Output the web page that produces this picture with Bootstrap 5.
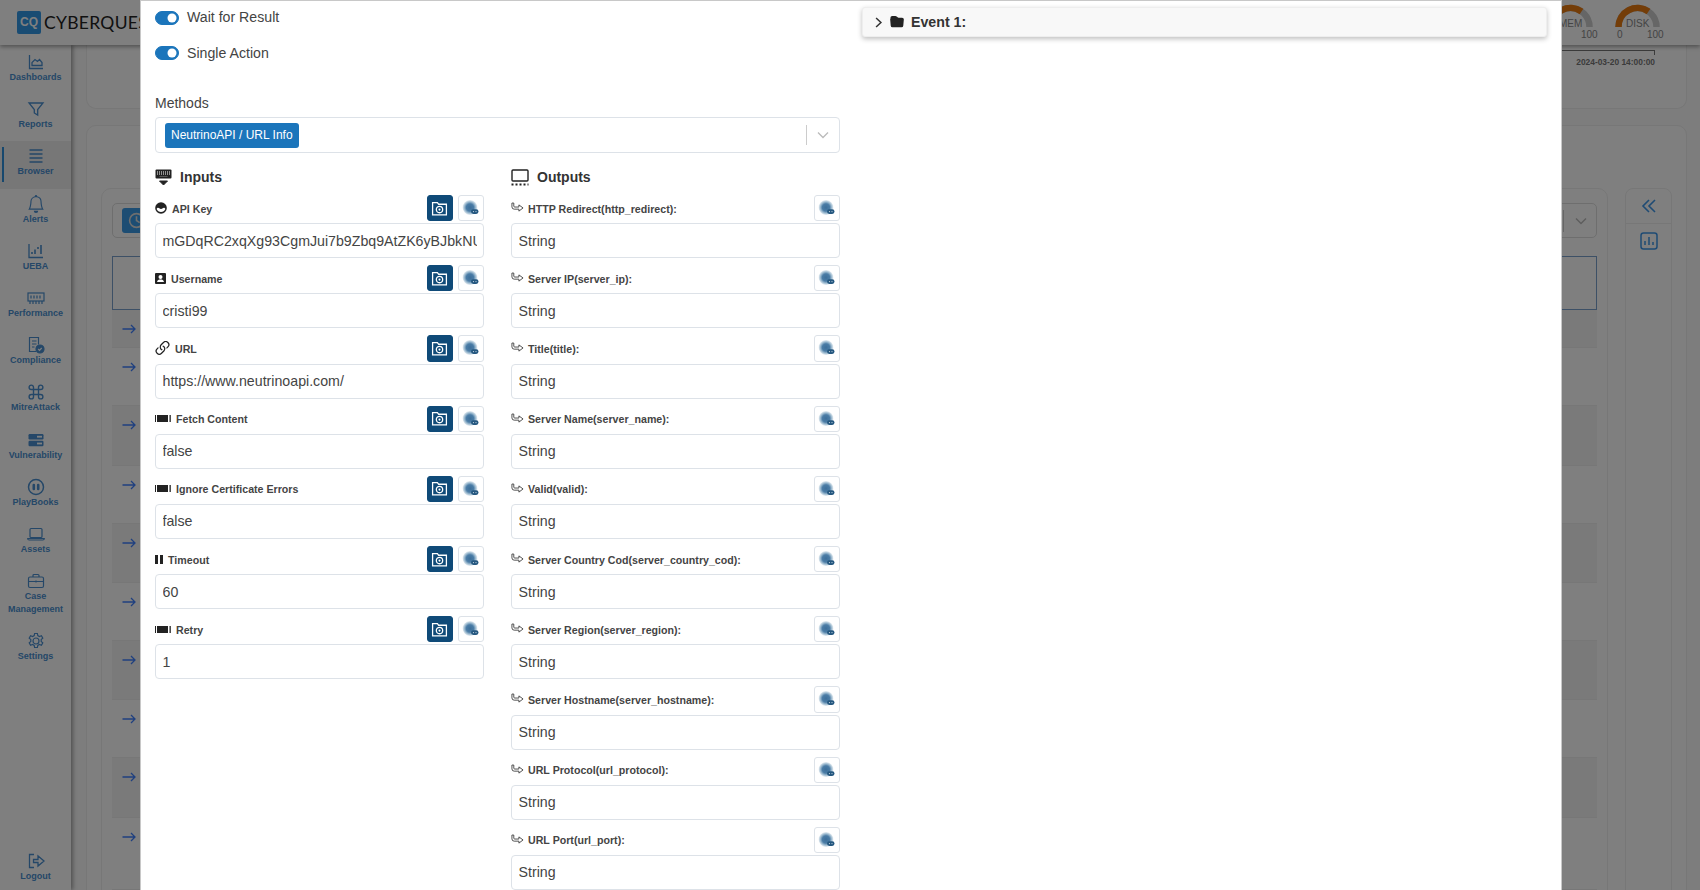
<!DOCTYPE html>
<html lang="en">
<head>
<meta charset="utf-8">
<title>Playbook action</title>
<link href="https://cdn.jsdelivr.net/npm/bootstrap@5.3.0/dist/css/bootstrap.min.css" rel="stylesheet">
<style>
html,body{height:890px;overflow:hidden;}
body{font-family:"Liberation Sans",Arial,sans-serif;font-size:14px;line-height:21px;color:#3a3a3a;background:#fafafa;}
.ic{display:block;fill:none;stroke:currentColor;}
.app-top{height:45px;background:#fff;box-shadow:0 2px 4px rgba(0,0,0,.35);position:relative;z-index:2;}
.brand-mark{width:24px;height:23px;margin-left:17px;border-radius:2px;background:#3398e6;color:#fff;font-size:12px;font-weight:700;line-height:23px;text-align:center;}
.brand-text{margin-left:3px;font-family:Lato,"Liberation Sans",sans-serif;font-size:17.500px;letter-spacing:.3px;color:#222;white-space:nowrap;}
.gauge-w{width:67px;}
.gauge-w svg{display:block;}
.gauge-w text{font-family:"Liberation Sans",sans-serif;font-size:10px;fill:#888;}
.app-body{height:845px;}
.side{width:71px;height:845px;background:#fff;box-shadow:2px 0 4px rgba(0,0,0,.35);position:relative;z-index:1;padding-top:2px;color:#4a8fd0;flex:none;}
.side-it{padding:6px 0 10.200px;text-align:center;font-size:9px;font-weight:700;line-height:13px;position:relative;}
.side-it svg{margin:0 auto;}
.side-it.on{background:#eee;}
.side-it.on::before{content:"";position:absolute;left:2px;top:6px;bottom:7px;width:2px;background:#2f90dc;}
.side-out{margin-top:auto;padding:6px 0 0;height:44px;}
.main-a{padding:0 13px 0 15px;min-width:0;}
.panel-a{height:64px;margin-bottom:16px;border:1px solid #eee;border-top:0;border-radius:0 0 10px 10px;background:#fff;padding:5px 31px 0 0;font-size:8.400px;font-weight:700;color:#777;text-align:right;line-height:10px;}
.axis-l{height:5px;margin:0 0 2px 1400px;border:1px solid #777;border-width:1px 1px 0 0;}
.panel-b{height:800px;border:1px solid #eee;border-radius:10px 10px 0 0;background:#fff;padding:62px 14px 0;gap:17px;}
.panel-c{min-width:0;border:1px solid #eee;border-radius:10px 10px 0 0;padding:14px 10px 0;}
.tool-b{height:35px;border:1px solid #ddd;border-radius:5px;padding:5px 9px;margin-bottom:18px;color:#bbb;}
.tool-clock{width:34px;height:25px;background:#3a9ae6;border-radius:3px;color:#ddd;padding:4px 6px;}
.tool-sep{width:1px;height:22px;background:#ccc;margin:0 11px;}
.frame-b{height:54px;border:1px solid #7aa0cc;}
.line-r{border-bottom:1px solid #eee;padding:11px 0 0 9px;color:#3f80ff;display:flex;align-items:flex-start;}
.line-d{background:#f4f4f4;}
.rail{width:47px;flex:none;border:1px solid #eee;border-radius:8px 8px 0 0;color:#3e97e8;}
.rail-h{height:35px;border-bottom:1px solid #eee;}
.dialog-w{width:1422px;max-width:1422px;margin:0 0 0 140px;}
.dialog-c{height:892px;overflow:hidden;border-radius:0;border:1px solid #c8c8c8;background-clip:border-box;}
.dialog-b{padding:6px 14px 0;flex:none;}
.row-m{--bs-gutter-x:22px;}
.row-i{--bs-gutter-x:27px;}
.sw-r{min-height:21px;padding-left:32px;margin-bottom:14.500px;font-size:14.150px;color:#444;}
.sw-r .form-check-input{width:24px;height:14px;margin-left:-32px;margin-top:3.500px;font-size:14px;background-color:#1b75bb;border-color:#1b75bb;}
.meth-l{margin:29px 0 3.500px;color:#444;}
.meth-s{height:36px;border:1px solid #dde2e8;border-radius:4px;padding:5px 9px;}
.chip-m{background:#1b75bb;color:#fff;font-size:12px;line-height:25px;height:25px;padding:0 6.500px 0 6px;border-radius:3px;}
.sep-m{width:1px;height:20px;background:#ccc;margin:0 10px 0 0;}
.sec-h{height:18px;margin:15px 0 9px;font-weight:700;color:#333;gap:8px;}
.sec-h svg{color:#222;}
.fld{margin-bottom:7px;}
.fld-h{height:26.200px;margin-bottom:2px;}
.fld-l{font-size:10.650px;font-weight:700;color:#444;line-height:14px;gap:5px;padding-top:1px;}
.fld-l svg{color:#222;margin-top:-1px;}
.fld-o{gap:4px;}
.fld-o svg{color:#444;margin-top:-2px;}
.btn-p{width:25.600px;height:26.200px;padding:0;border-radius:3px;background:#0f4a78;border:1px solid #0f4a78;color:#fff;display:flex;align-items:center;justify-content:center;}
.btn-q{width:26.400px;height:26.200px;padding:0;margin-left:5px;border-radius:3px;background:#fff;border:1px solid #dde2e8;display:flex;align-items:center;justify-content:center;}
.btn-p:hover{background:#0f4a78;color:#fff;border-color:#0f4a78;}
.btn-q:hover{background:#fff;border-color:#dde2e8;}
.inp-x{height:35px;font-size:14.200px;line-height:21px;padding:6px 6.500px;border:1px solid #dde2e8;border-radius:4px;color:#444;}
.ev-b{height:30px;border:1px solid #eee;border-radius:3px;background:#f8f8f8;box-shadow:0 2px 5px rgba(0,0,0,.25);padding:0 0 0 10px;color:#333;font-size:14.200px;font-weight:700;gap:6px;}
.ev-b span{margin-left:1px;}
</style>
</head>
<body>
<svg width="0" height="0" class="position-absolute">
<defs>
<radialGradient id="blobg"><stop offset="0" stop-color="#3d6f9a"/><stop offset=".5" stop-color="#4a7ca6"/><stop offset=".78" stop-color="#a3bfd3"/><stop offset="1" stop-color="#e6edf2"/></radialGradient>
<symbol id="i-shot" viewBox="0 0 16 16"><path d="M1.500 14V2.500h4.500l1.200 1.500h7.300v10z" fill="none" stroke="currentColor" stroke-width="1.200"/><circle cx="8" cy="9" r="3" fill="none" stroke="currentColor" stroke-width="1.200"/><circle cx="8" cy="9" r="1" fill="currentColor"/></symbol>
<symbol id="i-blob" viewBox="0 0 18 18"><circle cx="8" cy="8.500" r="7.400" fill="url(#blobg)"/><rect x="9" y="10.300" width="7.500" height="4.600" rx="2.300" fill="#24577f"/><circle cx="11.500" cy="12.600" r=".6" fill="#c3d4e1"/><circle cx="14" cy="12.600" r=".6" fill="#c3d4e1"/></symbol>
<symbol id="i-bool" viewBox="0 0 16 7"><rect x="0" y="0" width="1" height="7" fill="currentColor"/><rect x="2" y="0" width="11" height="7" fill="currentColor"/><rect x="14.500" y="0" width="1.300" height="7" fill="currentColor"/></symbol>
<symbol id="i-sub" viewBox="0 0 14 11"><path d="M1 .7h2V4q0 1 1 1h4.500V2.700L13 6l-4.500 3.400V7.300H3.500Q1 7.300 1 4.800z" fill="none" stroke="currentColor" stroke-width="1"/></symbol>
</defs>
</svg>

<header class="app-top d-flex align-items-center">
  <div class="brand-mark">CQ</div>
  <div class="brand-text">CYBERQUEST</div>
  <div class="d-flex ms-auto gauge-g" style="margin-right:29.500px">
    <div class="gauge-w"><svg width="67" height="45" viewBox="0 0 67 45"><path d="M14.500 27a19 19 0 0 1 38 0" fill="none" stroke="#ccc" stroke-width="6.500"/><path d="M14.500 27a19 19 0 0 1 30-15.500" fill="none" stroke="#e87a10" stroke-width="6.500"/><text x="22" y="27">MEM</text><text x="11" y="38">0</text><text x="44" y="38">100</text></svg></div>
    <div class="gauge-w"><svg width="67" height="45" viewBox="0 0 67 45"><path d="M14.500 27a19 19 0 0 1 38 0" fill="none" stroke="#ccc" stroke-width="6.500"/><path d="M14.500 27a19 19 0 0 1 30-15.500" fill="none" stroke="#e87a10" stroke-width="6.500"/><text x="22" y="27">DISK</text><text x="13" y="38">0</text><text x="43" y="38">100</text></svg></div>
  </div>
</header>

<div class="app-body d-flex">
  <nav class="side d-flex flex-column">
    <div class="side-it"><svg class="ic" width="18" height="18" viewBox="0 0 18 18" stroke-width="1.300"><path d="M2.500 2v13.500H16"/><path d="M5 12.500V9.500l3-3 2.500 2 2-2 2.500 3v3z"/></svg>Dashboards</div>
    <div class="side-it"><svg class="ic" width="18" height="18" viewBox="0 0 18 18" stroke-width="1.300"><path d="M2 3h14l-5.300 6.500V15l-3.400-2V9.500z"/></svg>Reports</div>
    <div class="side-it on"><svg class="ic" width="18" height="18" viewBox="0 0 18 18" stroke-width="1.500"><path d="M2.500 3h13M2.500 7h13M2.500 11h13M2.500 15h13"/></svg>Browser</div>
    <div class="side-it"><svg class="ic" width="18" height="18" viewBox="0 0 16 16" style="stroke:none"><path fill="currentColor" d="M8 16a2 2 0 0 0 2-2H6a2 2 0 0 0 2 2zM8 1.918l-.797.161A4.002 4.002 0 0 0 4 6c0 .628-.134 2.197-.459 3.742-.16.767-.376 1.566-.663 2.258h10.244c-.287-.692-.502-1.490-.663-2.258C12.134 8.197 12 6.628 12 6a4.002 4.002 0 0 0-3.203-3.920L8 1.917zM14.220 12c.223.447.481.801.78 1H1c.299-.199.557-.553.78-1C2.680 10.200 3 6.880 3 6c0-2.420 1.720-4.440 4.005-4.901a1 1 0 1 1 1.990 0A5.002 5.002 0 0 1 13 6c0 .880.320 4.200 1.220 6z"/></svg>Alerts</div>
    <div class="side-it"><svg class="ic" width="18" height="18" viewBox="0 0 18 18" stroke-width="1.300"><path d="M2 2v13.500h14"/><path d="M5 12v-2M8 12V7.500M11 7V5M14 12V3" stroke-width="1.600"/></svg>UEBA</div>
    <div class="side-it"><svg class="ic" width="18" height="18" viewBox="0 0 18 18" stroke-width="1.200"><rect x="1" y="4" width="16" height="8"/><path d="M4 6.500v3M7 6.500v3M10 6.500v3M13 6.500v3M3 12v3M6 12v3M9 12v3M12 12v3M15 12v3"/></svg>Performance</div>
    <div class="side-it"><svg class="ic" width="18" height="18" viewBox="0 0 18 18" stroke-width="1.200"><path d="M9 15.500H2.500V1.500h9v7"/><path d="M5 5h4.500M5 8h4.500M5 11h2.500"/><circle cx="13" cy="13" r="4" fill="currentColor"/><path d="M11.200 13l1.300 1.300 2.200-2.300" stroke="#fff"/></svg>Compliance</div>
    <div class="side-it"><svg class="ic" width="18" height="18" viewBox="0 0 18 18" stroke-width="1.400"><path d="M6.500 6.500h5v5h-5zM6.500 6.500H4.300a2.200 2.200 0 1 1 2.200-2.200zM11.500 6.500V4.300a2.200 2.200 0 1 1 2.200 2.200zM11.500 11.500h2.200a2.200 2.200 0 1 1-2.200 2.200zM6.500 11.500v2.200a2.200 2.200 0 1 1-2.200-2.200z"/></svg>MitreAttack</div>
    <div class="side-it"><svg class="ic" width="18" height="18" viewBox="0 0 18 18" style="stroke:none"><rect x="1.500" y="3" width="15" height="5.500" rx="1.200" fill="currentColor"/><rect x="1.500" y="9.800" width="15" height="5.500" rx="1.200" fill="currentColor"/><rect x="10" y="4.800" width="5" height="1.800" fill="#fff"/><rect x="10" y="11.600" width="5" height="1.800" fill="#fff"/></svg>Vulnerability</div>
    <div class="side-it"><svg class="ic" width="18" height="18" viewBox="0 0 18 18" stroke-width="1.500"><circle cx="9" cy="9" r="7.500"/><rect x="5.500" y="5.800" width="2.600" height="6.400" rx="1.200" fill="currentColor" stroke="none"/><rect x="9.900" y="5.800" width="2.600" height="6.400" rx="1.200" fill="currentColor" stroke="none"/></svg>PlayBooks</div>
    <div class="side-it"><svg class="ic" width="18" height="18" viewBox="0 0 18 18" stroke-width="1.200"><rect x="3" y="3.500" width="12" height="9" rx="1"/><path d="M.7 13.500h16.600c0 1-.6 1.500-1.500 1.500H2.200c-.9 0-1.500-.5-1.500-1.500z"/></svg>Assets</div>
    <div class="side-it"><svg class="ic" width="18" height="18" viewBox="0 0 18 18" stroke-width="1.200"><rect x="1.500" y="5" width="15" height="10.500" rx="1.500"/><path d="M6 5V3.500c0-.6.400-1 1-1h4c.6 0 1 .4 1 1V5M1.500 9.500h15M9 8.500v2"/></svg>Case Management</div>
    <div class="side-it"><svg class="ic" width="18" height="18" viewBox="0 0 18 18" stroke-width="1.200"><circle cx="9" cy="9" r="3"/><path d="M7.600 1.500h2.800l.4 2.100 1.600.9 2-.7 1.400 2.400-1.600 1.400v1.800l1.600 1.400-1.400 2.400-2-.7-1.600.9-.4 2.100H7.600l-.4-2.100-1.600-.9-2 .7-1.400-2.400 1.600-1.400V7.600L2.200 6.200l1.400-2.400 2 .7 1.600-.9z"/></svg>Settings</div>
    <div class="side-it side-out"><svg class="ic" width="18" height="18" viewBox="0 0 18 18" stroke-width="1.300"><path d="M7 2.500H2.500v13H7"/><path d="M6.500 7.500h4.500V4l6 5-6 5v-3.500H6.500z"/></svg>Logout</div>
  </nav>

  <main class="main-a flex-grow-1">
    <section class="panel-a"><div class="axis-l"></div>2024-03-20 14:00:00</section>
    <section class="panel-b d-flex">
      <div class="panel-c flex-grow-1">
        <div class="tool-b d-flex align-items-center">
          <div class="tool-clock"><svg class="ic" width="17" height="17" viewBox="0 0 16 16" stroke-width="1.500"><circle cx="8" cy="8" r="6.500"/><path d="M8 4v4l3 2"/></svg></div>
          <div class="tool-sep ms-auto"></div>
          <svg class="ic" width="12" height="8" viewBox="0 0 12 8" stroke-width="1.500"><path d="M1 1.500l5 5 5-5"/></svg>
        </div>
        <div class="frame-b"></div>
        <div class="line-r line-d" style="height:38px"><svg class="ic" width="16" height="16" viewBox="0 0 16 16" stroke-width="1.300"><path d="M1.500 8h12.500M10 4l4 4-4 4"/></svg></div>
        <div class="line-r" style="height:58px"><svg class="ic" width="16" height="16" viewBox="0 0 16 16" stroke-width="1.300"><path d="M1.500 8h12.500M10 4l4 4-4 4"/></svg></div>
        <div class="line-r line-d" style="height:60px"><svg class="ic" width="16" height="16" viewBox="0 0 16 16" stroke-width="1.300"><path d="M1.500 8h12.500M10 4l4 4-4 4"/></svg></div>
        <div class="line-r" style="height:58px"><svg class="ic" width="16" height="16" viewBox="0 0 16 16" stroke-width="1.300"><path d="M1.500 8h12.500M10 4l4 4-4 4"/></svg></div>
        <div class="line-r line-d" style="height:59px"><svg class="ic" width="16" height="16" viewBox="0 0 16 16" stroke-width="1.300"><path d="M1.500 8h12.500M10 4l4 4-4 4"/></svg></div>
        <div class="line-r" style="height:58px"><svg class="ic" width="16" height="16" viewBox="0 0 16 16" stroke-width="1.300"><path d="M1.500 8h12.500M10 4l4 4-4 4"/></svg></div>
        <div class="line-r line-d" style="height:59px"><svg class="ic" width="16" height="16" viewBox="0 0 16 16" stroke-width="1.300"><path d="M1.500 8h12.500M10 4l4 4-4 4"/></svg></div>
        <div class="line-r" style="height:58px"><svg class="ic" width="16" height="16" viewBox="0 0 16 16" stroke-width="1.300"><path d="M1.500 8h12.500M10 4l4 4-4 4"/></svg></div>
        <div class="line-r line-d" style="height:60px"><svg class="ic" width="16" height="16" viewBox="0 0 16 16" stroke-width="1.300"><path d="M1.500 8h12.500M10 4l4 4-4 4"/></svg></div>
        <div class="line-r" style="height:72px"><svg class="ic" width="16" height="16" viewBox="0 0 16 16" stroke-width="1.300"><path d="M1.500 8h12.500M10 4l4 4-4 4"/></svg></div>
      </div>
      <aside class="rail">
        <div class="rail-h d-flex align-items-center justify-content-center"><svg class="ic" width="16" height="16" viewBox="0 0 16 16" stroke-width="1.600"><path d="M8 2L2 8l6 6M14 2L8 8l6 6"/></svg></div>
        <div class="d-flex justify-content-center pt-2"><svg class="ic" width="18" height="18" viewBox="0 0 18 18" stroke-width="1.500"><rect x="1" y="1" width="16" height="16" rx="2.500"/><path d="M5 13V9M9 13V5M13 13v-3"/></svg></div>
      </aside>
    </section>
  </main>
</div>

<div class="modal-backdrop fade show"></div>

<div class="modal d-block" tabindex="-1" role="dialog">
  <div class="modal-dialog dialog-w">
    <div class="modal-content dialog-c">
      <div class="modal-body dialog-b">
        <div class="row row-m">
          <div class="col-6">
            <div class="form-check form-switch sw-r"><input class="form-check-input" type="checkbox" role="switch" id="sw1" checked><label class="form-check-label" for="sw1">Wait for Result</label></div>
            <div class="form-check form-switch sw-r mb-0"><input class="form-check-input" type="checkbox" role="switch" id="sw2" checked><label class="form-check-label" for="sw2">Single Action</label></div>
            <div class="meth-l">Methods</div>
            <div class="meth-s d-flex align-items-center">
              <span class="chip-m">NeutrinoAPI / URL Info</span>
              <span class="sep-m ms-auto"></span>
              <svg class="ic" style="color:#bbb;margin-right:1px" width="12" height="8" viewBox="0 0 12 8" stroke-width="1.300"><path d="M1 1.500l5 5 5-5"/></svg>
            </div>
            <div class="row row-i">
              <div class="col-6">
                <div class="sec-h d-flex align-items-center"><svg class="ic" width="17" height="17" viewBox="0 0 17 17" stroke="none"><rect x=".5" y=".5" width="16" height="9" rx="1" fill="currentColor" stroke="none"/><path d="M2 3h13M2 5h13" stroke="#fff" stroke-width="1" stroke-dasharray="1 1"/><rect x="4" y="6.500" width="9" height="1.300" fill="#fff"/><path d="M4.500 12h8l-4 4z" fill="currentColor"/></svg>Inputs</div>

                <div class="fld">
                  <div class="fld-h d-flex align-items-center justify-content-between">
                    <div class="fld-l d-flex align-items-center"><svg class="ic" width="12" height="12" viewBox="0 0 12 12" style="stroke:none"><circle cx="6" cy="6" r="5.800" fill="currentColor"/><path d="M1.600 7c.6-1.600 2-1.500 2.700-.7.800.8 2.600.8 3.400 0 .7-.8 2.100-.9 2.700.7-.8 2-2.400 3-4.400 3S2.400 9 1.600 7z" fill="#fff"/></svg>API Key</div>
                    <div class="d-flex"><button class="btn btn-p" type="button" aria-label="Snapshot"><svg width="17" height="17"><use href="#i-shot"/></svg></button><button class="btn btn-q" type="button" aria-label="Variable"><svg width="18" height="18"><use href="#i-blob"/></svg></button></div>
                  </div>
                  <input class="form-control inp-x" type="text" value="mGDqRC2xqXg93CgmJui7b9Zbq9AtZK6yBJbkNUBBHrjYxVt">
                </div>

                <div class="fld">
                  <div class="fld-h d-flex align-items-center justify-content-between">
                    <div class="fld-l d-flex align-items-center"><svg class="ic" width="11" height="11" viewBox="0 0 11 11" style="stroke:none"><rect width="11" height="11" rx="1" fill="currentColor"/><circle cx="5.500" cy="4" r="2" fill="#fff"/><path d="M2 9c.4-2 1.800-2.500 3.500-2.500S8.600 7 9 9z" fill="#fff"/></svg>Username</div>
                    <div class="d-flex"><button class="btn btn-p" type="button" aria-label="Snapshot"><svg width="17" height="17"><use href="#i-shot"/></svg></button><button class="btn btn-q" type="button" aria-label="Variable"><svg width="18" height="18"><use href="#i-blob"/></svg></button></div>
                  </div>
                  <input class="form-control inp-x" type="text" value="cristi99">
                </div>

                <div class="fld">
                  <div class="fld-h d-flex align-items-center justify-content-between">
                    <div class="fld-l d-flex align-items-center"><svg class="ic" width="15" height="15" viewBox="2 2 12 12" style="stroke:none"><path fill="currentColor" d="M4.715 6.542 3.343 7.914a3 3 0 1 0 4.243 4.243l1.828-1.829A3 3 0 0 0 8.586 5.500L8 6.086a1.002 1.002 0 0 0-.154.199 2 2 0 0 1 .861 3.337L6.880 11.450a2 2 0 1 1-2.830-2.830l.793-.792a4.018 4.018 0 0 1-.128-1.287z"/><path fill="currentColor" d="M6.586 4.672A3 3 0 0 0 7.414 9.500l.775-.776a2 2 0 0 1-.896-3.346L9.120 3.550a2 2 0 1 1 2.830 2.830l-.793.792c.112.420.155.855.128 1.287l1.372-1.372a3 3 0 1 0-4.243-4.243L6.586 4.672z"/></svg>URL</div>
                    <div class="d-flex"><button class="btn btn-p" type="button" aria-label="Snapshot"><svg width="17" height="17"><use href="#i-shot"/></svg></button><button class="btn btn-q" type="button" aria-label="Variable"><svg width="18" height="18"><use href="#i-blob"/></svg></button></div>
                  </div>
                  <input class="form-control inp-x" type="text" value="https://www.neutrinoapi.com/">
                </div>

                <div class="fld">
                  <div class="fld-h d-flex align-items-center justify-content-between">
                    <div class="fld-l d-flex align-items-center"><svg width="16" height="7" class="ic" style="stroke:none"><use href="#i-bool"/></svg>Fetch Content</div>
                    <div class="d-flex"><button class="btn btn-p" type="button" aria-label="Snapshot"><svg width="17" height="17"><use href="#i-shot"/></svg></button><button class="btn btn-q" type="button" aria-label="Variable"><svg width="18" height="18"><use href="#i-blob"/></svg></button></div>
                  </div>
                  <input class="form-control inp-x" type="text" value="false">
                </div>

                <div class="fld">
                  <div class="fld-h d-flex align-items-center justify-content-between">
                    <div class="fld-l d-flex align-items-center"><svg width="16" height="7" class="ic" style="stroke:none"><use href="#i-bool"/></svg>Ignore Certificate Errors</div>
                    <div class="d-flex"><button class="btn btn-p" type="button" aria-label="Snapshot"><svg width="17" height="17"><use href="#i-shot"/></svg></button><button class="btn btn-q" type="button" aria-label="Variable"><svg width="18" height="18"><use href="#i-blob"/></svg></button></div>
                  </div>
                  <input class="form-control inp-x" type="text" value="false">
                </div>

                <div class="fld">
                  <div class="fld-h d-flex align-items-center justify-content-between">
                    <div class="fld-l d-flex align-items-center"><svg class="ic" width="8" height="9" viewBox="0 0 8 9" style="stroke:none"><rect width="3" height="9" fill="currentColor"/><rect x="5" width="3" height="9" fill="currentColor"/></svg>Timeout</div>
                    <div class="d-flex"><button class="btn btn-p" type="button" aria-label="Snapshot"><svg width="17" height="17"><use href="#i-shot"/></svg></button><button class="btn btn-q" type="button" aria-label="Variable"><svg width="18" height="18"><use href="#i-blob"/></svg></button></div>
                  </div>
                  <input class="form-control inp-x" type="text" value="60">
                </div>

                <div class="fld">
                  <div class="fld-h d-flex align-items-center justify-content-between">
                    <div class="fld-l d-flex align-items-center"><svg width="16" height="7" class="ic" style="stroke:none"><use href="#i-bool"/></svg>Retry</div>
                    <div class="d-flex"><button class="btn btn-p" type="button" aria-label="Snapshot"><svg width="17" height="17"><use href="#i-shot"/></svg></button><button class="btn btn-q" type="button" aria-label="Variable"><svg width="18" height="18"><use href="#i-blob"/></svg></button></div>
                  </div>
                  <input class="form-control inp-x" type="text" value="1">
                </div>
              </div>

              <div class="col-6">
                <div class="sec-h d-flex align-items-center"><svg class="ic" width="18" height="17" viewBox="0 0 18 17" stroke="none"><rect x="1" y="1" width="16" height="11" rx="1" stroke="currentColor" stroke-width="1.400" fill="none"/><path d="M.5 15.500h17" stroke="currentColor" stroke-width="2" stroke-dasharray="2 2"/></svg>Outputs</div>

                <div class="fld"><div class="fld-h d-flex align-items-center justify-content-between"><div class="fld-l fld-o d-flex align-items-center"><svg class="ic" width="13" height="11" style="stroke:none"><use href="#i-sub"/></svg>HTTP Redirect(http_redirect):</div><button class="btn btn-q" type="button" aria-label="Variable"><svg width="18" height="18"><use href="#i-blob"/></svg></button></div><input class="form-control inp-x" type="text" value="String"></div>
                <div class="fld"><div class="fld-h d-flex align-items-center justify-content-between"><div class="fld-l fld-o d-flex align-items-center"><svg class="ic" width="13" height="11" style="stroke:none"><use href="#i-sub"/></svg>Server IP(server_ip):</div><button class="btn btn-q" type="button" aria-label="Variable"><svg width="18" height="18"><use href="#i-blob"/></svg></button></div><input class="form-control inp-x" type="text" value="String"></div>
                <div class="fld"><div class="fld-h d-flex align-items-center justify-content-between"><div class="fld-l fld-o d-flex align-items-center"><svg class="ic" width="13" height="11" style="stroke:none"><use href="#i-sub"/></svg>Title(title):</div><button class="btn btn-q" type="button" aria-label="Variable"><svg width="18" height="18"><use href="#i-blob"/></svg></button></div><input class="form-control inp-x" type="text" value="String"></div>
                <div class="fld"><div class="fld-h d-flex align-items-center justify-content-between"><div class="fld-l fld-o d-flex align-items-center"><svg class="ic" width="13" height="11" style="stroke:none"><use href="#i-sub"/></svg>Server Name(server_name):</div><button class="btn btn-q" type="button" aria-label="Variable"><svg width="18" height="18"><use href="#i-blob"/></svg></button></div><input class="form-control inp-x" type="text" value="String"></div>
                <div class="fld"><div class="fld-h d-flex align-items-center justify-content-between"><div class="fld-l fld-o d-flex align-items-center"><svg class="ic" width="13" height="11" style="stroke:none"><use href="#i-sub"/></svg>Valid(valid):</div><button class="btn btn-q" type="button" aria-label="Variable"><svg width="18" height="18"><use href="#i-blob"/></svg></button></div><input class="form-control inp-x" type="text" value="String"></div>
                <div class="fld"><div class="fld-h d-flex align-items-center justify-content-between"><div class="fld-l fld-o d-flex align-items-center"><svg class="ic" width="13" height="11" style="stroke:none"><use href="#i-sub"/></svg>Server Country Cod(server_country_cod):</div><button class="btn btn-q" type="button" aria-label="Variable"><svg width="18" height="18"><use href="#i-blob"/></svg></button></div><input class="form-control inp-x" type="text" value="String"></div>
                <div class="fld"><div class="fld-h d-flex align-items-center justify-content-between"><div class="fld-l fld-o d-flex align-items-center"><svg class="ic" width="13" height="11" style="stroke:none"><use href="#i-sub"/></svg>Server Region(server_region):</div><button class="btn btn-q" type="button" aria-label="Variable"><svg width="18" height="18"><use href="#i-blob"/></svg></button></div><input class="form-control inp-x" type="text" value="String"></div>
                <div class="fld"><div class="fld-h d-flex align-items-center justify-content-between"><div class="fld-l fld-o d-flex align-items-center"><svg class="ic" width="13" height="11" style="stroke:none"><use href="#i-sub"/></svg>Server Hostname(server_hostname):</div><button class="btn btn-q" type="button" aria-label="Variable"><svg width="18" height="18"><use href="#i-blob"/></svg></button></div><input class="form-control inp-x" type="text" value="String"></div>
                <div class="fld"><div class="fld-h d-flex align-items-center justify-content-between"><div class="fld-l fld-o d-flex align-items-center"><svg class="ic" width="13" height="11" style="stroke:none"><use href="#i-sub"/></svg>URL Protocol(url_protocol):</div><button class="btn btn-q" type="button" aria-label="Variable"><svg width="18" height="18"><use href="#i-blob"/></svg></button></div><input class="form-control inp-x" type="text" value="String"></div>
                <div class="fld"><div class="fld-h d-flex align-items-center justify-content-between"><div class="fld-l fld-o d-flex align-items-center"><svg class="ic" width="13" height="11" style="stroke:none"><use href="#i-sub"/></svg>URL Port(url_port):</div><button class="btn btn-q" type="button" aria-label="Variable"><svg width="18" height="18"><use href="#i-blob"/></svg></button></div><input class="form-control inp-x" type="text" value="String"></div>
              </div>
            </div>
          </div>
          <div class="col-6">
            <div class="ev-b d-flex align-items-center">
              <svg class="ic" width="11" height="11" viewBox="0 0 16 16" stroke-width="2.200"><path d="M4.500 1.500l7 6.500-7 6.500"/></svg>
              <svg class="ic" width="14" height="14" viewBox="0 0 16 16" style="stroke:none;color:#222"><path fill="currentColor" d="M9.828 3h3.982a2 2 0 0 1 1.992 2.181l-.637 7A2 2 0 0 1 13.174 14H2.825a2 2 0 0 1-1.991-1.819l-.637-7a1.990 1.990 0 0 1 .342-1.310L.5 3a2 2 0 0 1 2-2h3.672a2 2 0 0 1 1.414.586l.828.828A2 2 0 0 0 9.828 3z"/></svg>
              <span>Event 1:</span>
            </div>
          </div>
        </div>
      </div>
    </div>
  </div>
</div>
<script src="https://cdn.jsdelivr.net/npm/bootstrap@5.3.0/dist/js/bootstrap.bundle.min.js"></script>
</body>
</html>
